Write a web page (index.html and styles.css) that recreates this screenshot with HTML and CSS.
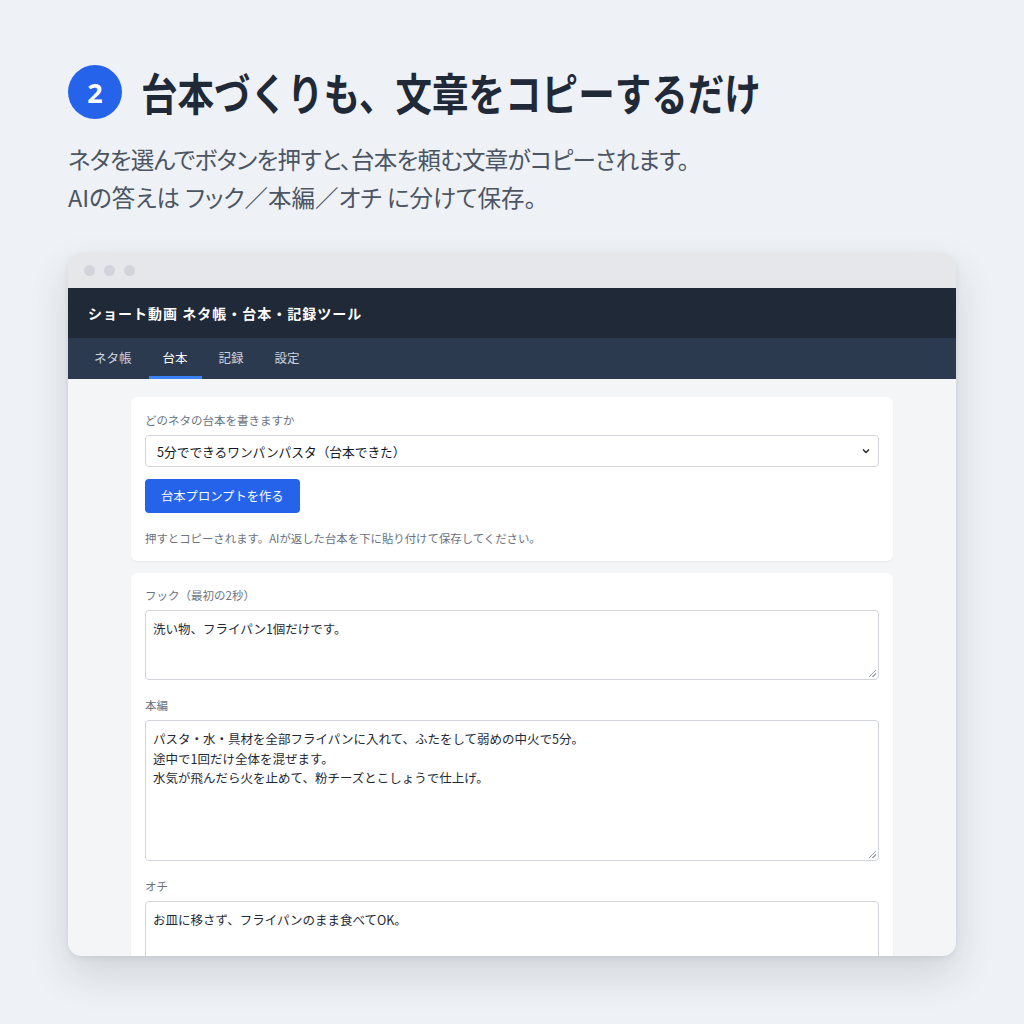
FILE: index.html
```html
<!DOCTYPE html>
<html lang="ja">
<head>
<meta charset="utf-8">
<title>台本づくり</title>
<link rel="stylesheet" href="styles.css">
</head>
<body>
<main class="page">
  <header class="intro">
    <div class="intro-head">
      <span class="step">2</span>
      <h1 class="intro-title">台本づくりも、文章をコピーするだけ</h1>
    </div>
    <p class="intro-text"><span class="intro-line intro-line-tight">ネタを選んでボタンを押すと、台本を頼む文章がコピーされます。</span><span class="intro-line">AIの答えは フック／本編／オチ に分けて保存。</span></p>
  </header>

  <section class="window">
    <div class="window-bar">
      <span class="dot"></span><span class="dot"></span><span class="dot"></span>
    </div>
    <div class="app-header">ショート動画 ネタ帳・台本・記録ツール</div>
    <nav class="tabs">
      <span class="tab">ネタ帳</span>
      <span class="tab tab-active">台本</span>
      <span class="tab">記録</span>
      <span class="tab">設定</span>
    </nav>
    <div class="app-body">
      <div class="content">
        <div class="card">
          <label class="field-label">どのネタの台本を書きますか</label>
          <div class="select">
            <span>5分でできるワンパンパスタ（台本できた）</span>
            <svg class="chevron" width="10" height="10" viewBox="0 0 10 10"><path d="M2 3.5 L5 6.5 L8 3.5" fill="none" stroke="#222" stroke-width="1.4"/></svg>
          </div>
          <button class="btn">台本プロンプトを作る</button>
          <p class="hint">押すとコピーされます。AIが返した台本を下に貼り付けて保存してください。</p>
        </div>
        <div class="card card-fields">
          <label class="field-label">フック（最初の2秒）</label>
          <div class="textarea ta-hook">洗い物、フライパン1個だけです。<span class="grip"></span></div>
          <label class="field-label field-gap">本編</label>
          <div class="textarea ta-main">パスタ・水・具材を全部フライパンに入れて、ふたをして弱めの中火で5分。<br>途中で1回だけ全体を混ぜます。<br>水気が飛んだら火を止めて、粉チーズとこしょうで仕上げ。<span class="grip"></span></div>
          <label class="field-label field-gap">オチ</label>
          <div class="textarea ta-end">お皿に移さず、フライパンのまま食べてOK。</div>
        </div>
      </div>
    </div>
  </section>
</main>
</body>
</html>
```

FILE: styles.css
```css
* { box-sizing: border-box; }

html, body {
  margin: 0;
  height: 100%;
}

body {
  background: #eef1f5;
  font-family: "Noto Sans CJK JP", "Noto Sans", sans-serif;
  color: #1f2937;
  overflow: hidden;
}

.page {
  padding: 65px 68px 0 68px;
}

/* heading block */
.intro-head {
  display: flex;
  align-items: center;
  gap: 19px;
}

.step {
  width: 54px;
  height: 54px;
  border-radius: 50%;
  background: #2563eb;
  color: #fff;
  font-family: "Noto Sans", sans-serif;
  font-weight: 700;
  font-size: 27px;
  display: flex;
  align-items: center;
  justify-content: center;
  flex: none;
}

/* tall, narrow headline type */
.intro-title {
  margin: 0;
  font-size: 44px;
  font-weight: 700;
  line-height: 54px;
  color: #1f2937;
  white-space: nowrap;
  transform: scaleX(0.83);
  transform-origin: left center;
}

.intro-text {
  margin: 21px 0 0 0;
  font-size: 23.5px;
  line-height: 38px;
  color: #4b5563;
  font-feature-settings: "palt";
  font-weight: 400;
}

.intro-line { display: block; }
.intro-line-tight { letter-spacing: -0.7px; }

/* browser window */
.window {
  margin-top: 37px;
  width: 888px;
  height: 703px;
  border-radius: 14px;
  background: #f3f4f6;
  overflow: hidden;
  box-shadow: 0 18px 40px rgba(30, 41, 59, 0.14), 0 2px 6px rgba(30, 41, 59, 0.08);
  display: flex;
  flex-direction: column;
}

.window-bar {
  height: 35px;
  flex: none;
  background: #e5e7eb;
  display: flex;
  align-items: center;
  gap: 9px;
  padding-left: 16px;
}

.dot {
  width: 11px;
  height: 11px;
  border-radius: 50%;
  background: #d1d5db;
}

.app-header {
  height: 50px;
  flex: none;
  background: #1f2937;
  color: #fff;
  font-size: 14px;
  font-weight: 700;
  display: flex;
  align-items: center;
  padding-left: 20px;
  letter-spacing: 1px;
}

.tabs {
  height: 41px;
  flex: none;
  background: #2b3a4e;
  display: flex;
  gap: 3px;
  padding-left: 12px;
}

.tab {
  display: flex;
  align-items: center;
  padding: 0 14px;
  font-size: 12.5px;
  color: #cbd5e1;
  border-bottom: 3px solid transparent;
  padding-top: 1px;
}

.tab-active {
  color: #fff;
  border-bottom-color: #3b82f6;
}

.app-body {
  flex: 1;
  background: #f4f5f7;
  padding-top: 18px;
}

.content {
  width: 762px;
  margin: 0 auto;
  display: flex;
  flex-direction: column;
  gap: 12px;
}

.card {
  background: #fff;
  border-radius: 6px;
  padding: 16px 14px;
  box-shadow: 0 1px 2px rgba(15, 23, 42, 0.06);
  display: flex;
  flex-direction: column;
  align-items: flex-start;
}

.card-fields { padding-top: 15px; }

.field-label {
  font-size: 11.5px;
  line-height: 14px;
  color: #6b7280;
  margin-bottom: 8px;
}

.field-gap {
  margin-top: 18px;
  margin-bottom: 8px;
}

.select {
  width: 100%;
  height: 32px;
  border: 1px solid #d1d5db;
  border-radius: 4px;
  display: flex;
  align-items: center;
  justify-content: space-between;
  padding: 0 7px 0 11px;
  font-size: 12.7px;
  color: #111827;
}

.chevron { flex: none; }

.btn {
  margin-top: 12px;
  height: 34px;
  padding: 0 16px;
  border: none;
  border-radius: 4px;
  background: #2563eb;
  color: #fff;
  font-family: inherit;
  font-size: 12.3px;
}

.hint {
  margin: 18px 0 0 0;
  font-size: 11.4px;
  line-height: 14px;
  color: #6b7280;
}

.textarea {
  position: relative;
  width: 100%;
  border: 1px solid #d1d5db;
  border-radius: 4px;
  padding: 8px 7px;
  font-size: 12.5px;
  line-height: 19.5px;
  color: #1f2937;
  flex: none;
}

.ta-hook { height: 70px; }
.ta-main { height: 141px; }
.ta-end { height: 70px; }

/* resize handle in the corner */
.grip {
  position: absolute;
  right: 2px;
  bottom: 2px;
  width: 7px;
  height: 7px;
  background: linear-gradient(135deg, transparent 45%, #9ca3af 45%, #9ca3af 55%, transparent 55%, transparent 70%, #9ca3af 70%, #9ca3af 80%, transparent 80%);
}
```
